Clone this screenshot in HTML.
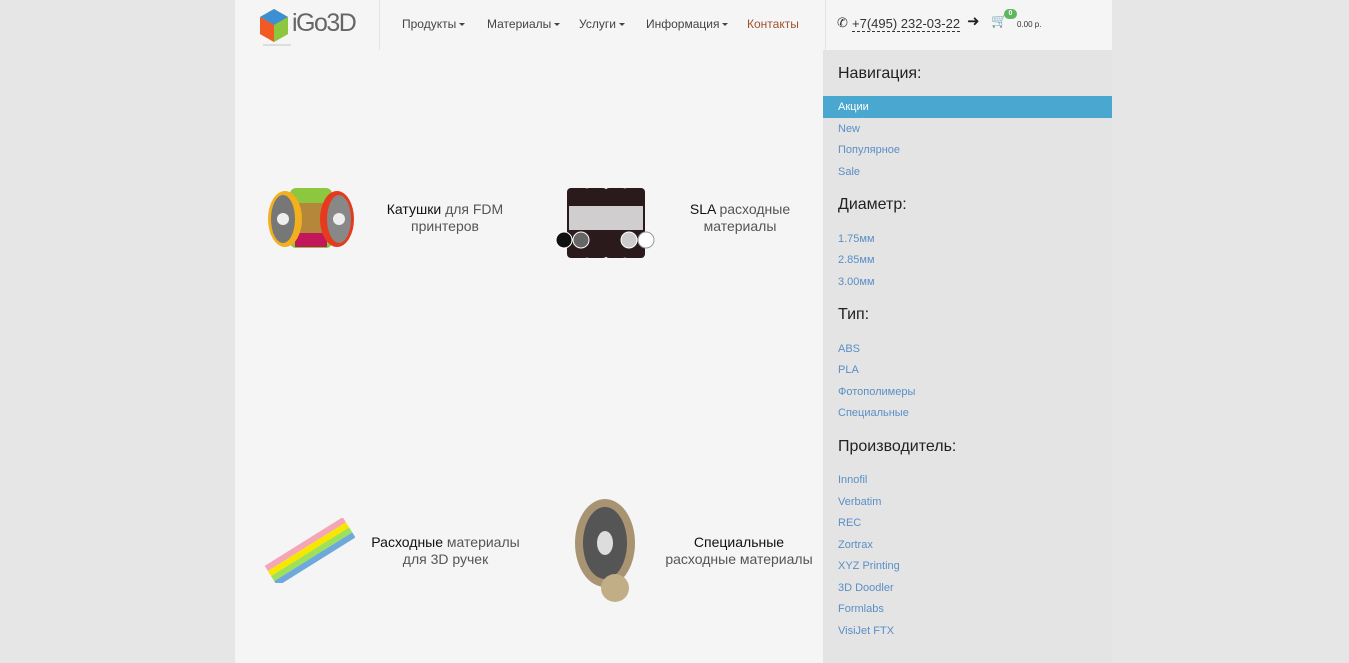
<!DOCTYPE html>
<html><head><meta charset="utf-8"><style>
*{margin:0;padding:0;box-sizing:border-box}
body{width:1349px;height:663px;background:#e6e6e6;font-family:"Liberation Sans",sans-serif;position:relative;overflow:hidden}
.main{position:absolute;left:235px;top:0;width:588px;height:663px;background:#f5f5f5}
.hdr{position:absolute;left:235px;top:0;width:877px;height:50px;background:#f5f5f5}
.side{position:absolute;left:823px;top:50px;width:289px;height:613px;background:#e4e4e4}
.vl{position:absolute;top:0;width:1px;height:50px;background:#e3e3e3}
.nav{position:absolute;top:17px;font-size:12px;color:#444}
.nav span{position:absolute;white-space:nowrap}
.car{display:inline-block;border-left:3px solid transparent;border-right:3px solid transparent;border-top:3px solid #444;vertical-align:middle;margin-left:3px}
.side h3{position:absolute;left:15px;font-size:16px;font-weight:normal;color:#222}
.side a{position:absolute;left:15px;font-size:11px;color:#5a8fc6;text-decoration:none}
.cap{position:absolute;font-size:14px;color:#111;text-align:center;line-height:17px}
</style></head><body>
<div class="main"></div>
<div class="hdr">
<svg style="position:absolute;left:23px;top:8px" width="32" height="36" viewBox="0 0 32 36"><polygon points="16,1 30,9 30,26 16,34 2,26 2,9" fill="#f7941d"/><polygon points="16,1 30,9 16,17 2,9" fill="#3c8fd0"/><polygon points="16,17 30,9 30,26 16,34" fill="#8dc63f"/><polygon points="2,9 16,17 16,34 2,26" fill="#f15a24"/></svg>
<div style="position:absolute;left:57px;top:9px;font-size:25px;color:#666;letter-spacing:-1.5px;font-weight:300">iGo3D</div>
<div style="position:absolute;left:28px;top:44px;width:28px;height:2px;background:#ddd"></div>
<div class="vl" style="left:144px"></div>
<div class="vl" style="left:590px"></div>
<div class="nav">
<span style="left:167px">Продукты<i class="car"></i></span>
<span style="left:252px">Материалы<i class="car"></i></span>
<span style="left:344px">Услуги<i class="car"></i></span>
<span style="left:411px">Информация<i class="car"></i></span>
<span style="left:512px;color:#a0522d">Контакты</span>
</div>
<div style="position:absolute;left:602px;top:15px;font-size:13px;color:#333">&#9990;</div>
<div style="position:absolute;left:617px;top:16px;font-size:13px;color:#333;border-bottom:1px dashed #333;line-height:15px">+7(495) 232-03-22</div>
<div style="position:absolute;left:732px;top:12px;font-size:15px;color:#222">&#10140;</div>
<div style="position:absolute;left:756px;top:13px;font-size:13px;color:#222">&#128722;</div>
<div style="position:absolute;left:769px;top:9px;width:13px;height:10px;border-radius:5px;background:#5cb85c;color:#fff;font-size:7px;text-align:center;line-height:10px;font-weight:bold">0</div>
<div style="position:absolute;left:782px;top:20px;font-size:8px;color:#333">0.00 р.</div>
</div>
<div class="side">
<h3 style="top:15px">Навигация:</h3>
<div style="position:absolute;left:0;top:46px;width:289px;height:22px;background:#4aa8d0"></div>
<a style="top:51px;color:#fff">Акции</a>
<a style="top:73px">New</a>
<a style="top:94px">Популярное</a>
<a style="top:116px">Sale</a>
<h3 style="top:146px">Диаметр:</h3>
<a style="top:183px">1.75мм</a>
<a style="top:204px">2.85мм</a>
<a style="top:226px">3.00мм</a>
<h3 style="top:256px">Тип:</h3>
<a style="top:293px">ABS</a>
<a style="top:314px">PLA</a>
<a style="top:336px">Фотополимеры</a>
<a style="top:357px">Специальные</a>
<h3 style="top:388px">Производитель:</h3>
<a style="top:424px">Innofil</a>
<a style="top:446px">Verbatim</a>
<a style="top:467px">REC</a>
<a style="top:489px">Zortrax</a>
<a style="top:510px">XYZ Printing</a>
<a style="top:532px">3D Doodler</a>
<a style="top:553px">Formlabs</a>
<a style="top:575px">VisiJet FTX</a>
</div>
<svg style="position:absolute;left:265px;top:183px" width="92" height="68"><rect x="25" y="5" width="42" height="60" rx="6" fill="#8dc63f"/><rect x="30" y="20" width="32" height="30" fill="#b5873a"/><rect x="30" y="50" width="32" height="14" fill="#c2185b"/><ellipse cx="20" cy="36" rx="17" ry="28" fill="#f2b01e"/><ellipse cx="18" cy="36" rx="12" ry="24" fill="#777"/><circle cx="18" cy="36" r="6" fill="#eee"/><ellipse cx="72" cy="36" rx="17" ry="28" fill="#e53a1e"/><ellipse cx="74" cy="36" rx="12" ry="24" fill="#888"/><circle cx="74" cy="36" r="6" fill="#eee"/></svg>
<div class="cap" style="left:380px;top:201px;width:130px">Катушки <span style="color:#555">для FDM<br>принтеров</span></div>
<svg style="position:absolute;left:555px;top:178px" width="102" height="82"><g fill="#2a1a1c"><rect x="12" y="10" width="22" height="70" rx="4"/><rect x="30" y="10" width="22" height="70" rx="4"/><rect x="50" y="10" width="22" height="70" rx="4"/><rect x="68" y="10" width="22" height="70" rx="4"/></g><rect x="14" y="28" width="74" height="24" fill="#eee" opacity=".85"/><circle cx="9" cy="62" r="8" fill="#111" stroke="#fff"/><circle cx="26" cy="62" r="8" fill="#666" stroke="#fff"/><circle cx="74" cy="62" r="8" fill="#ccc" stroke="#fff"/><circle cx="91" cy="62" r="8" fill="#fff" stroke="#999"/></svg>
<div class="cap" style="left:675px;top:201px;width:130px">SLA <span style="color:#555">расходные<br>материалы</span></div>
<svg style="position:absolute;left:263px;top:518px" width="92" height="65"><g transform="rotate(-32 46 32)"><rect x="0" y="22" width="92" height="6" fill="#f4a6b8"/><rect x="0" y="28" width="92" height="6" fill="#f7e600"/><rect x="0" y="34" width="92" height="6" fill="#9ee05a"/><rect x="0" y="40" width="92" height="6" fill="#6fa9dc"/></g></svg>
<div class="cap" style="left:368px;top:534px;width:155px">Расходные <span style="color:#555">материалы<br>для 3D ручек</span></div>
<svg style="position:absolute;left:570px;top:498px" width="70" height="106"><ellipse cx="35" cy="45" rx="30" ry="44" fill="#a89472"/><ellipse cx="35" cy="45" rx="22" ry="36" fill="#555"/><ellipse cx="35" cy="45" rx="8" ry="12" fill="#ddd"/><ellipse cx="45" cy="90" rx="14" ry="14" fill="#c2ae86"/></svg>
<div class="cap" style="left:664px;top:534px;width:150px">Специальные<br><span style="color:#555">расходные материалы</span></div>
</body></html>
